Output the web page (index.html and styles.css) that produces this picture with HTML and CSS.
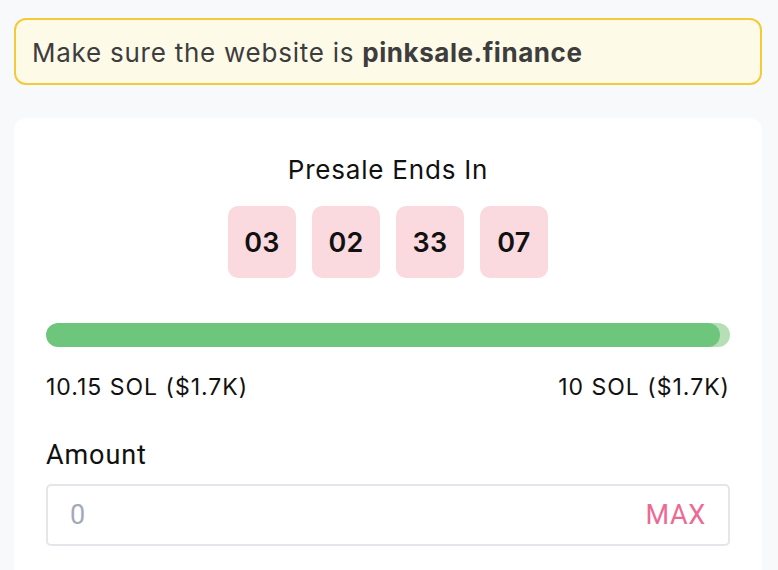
FILE: index.html
```html
<!DOCTYPE html>
<html lang="en">
<head>
<meta charset="utf-8">
<title>Presale</title>
<link rel="stylesheet" href="styles.css">
</head>
<body>
<div class="page">
  <div class="notice">Make sure the website is <strong>pinksale.finance</strong></div>
  <section class="card">
    <h2 class="title">Presale Ends In</h2>
    <div class="countdown">
      <div class="cell">03</div>
      <div class="cell">02</div>
      <div class="cell">33</div>
      <div class="cell">07</div>
    </div>
    <div class="progress">
      <div class="progress-fill" style="width: 98.6%"></div>
    </div>
    <div class="range">
      <span>10.15 SOL ($1.7K)</span>
      <span>10 SOL ($1.7K)</span>
    </div>
    <label class="field-label" for="amount">Amount</label>
    <div class="field">
      <input id="amount" class="field-input" type="text" placeholder="0">
      <button class="max-btn" type="button">MAX</button>
    </div>
  </section>
</div>
</body>
</html>
```
FILE: styles.css
```css
* { box-sizing: border-box; }
html, body {
  margin: 0;
  background: #f8f9fb;
  font-family: Inter, "Noto Sans", sans-serif;
  color: #111;
}
.page {
  padding: 18px 16px 0 14px;
  display: flex;
  flex-direction: column;
  gap: 33px;
}
.notice {
  border: 2px solid #f3ca3a;
  background: #fefae8;
  border-radius: 12px;
  padding: 15px 16px 13px 16px;
  font-size: 26px;
  line-height: 35px;
  letter-spacing: 0.75px;
  color: #3d3d3d;
  white-space: nowrap;
}
.notice strong { font-weight: 700; letter-spacing: 0.55px; }
.card {
  background: #fff;
  border-radius: 12px;
  padding: 34px 32px 40px;
  display: flex;
  flex-direction: column;
}
.title {
  margin: 0;
  text-align: center;
  font-size: 26px;
  line-height: 36px;
  letter-spacing: 0.8px;
  font-weight: 400;
  color: #111;
}
.countdown {
  margin-top: 18px;
  display: flex;
  justify-content: center;
  gap: 16px;
}
.cell {
  width: 68px;
  height: 72px;
  border-radius: 10px;
  background: #fadadf;
  display: flex;
  align-items: center;
  justify-content: center;
  font-size: 27px;
  font-weight: 600;
  letter-spacing: 0.3px;
  color: #111;
}
.progress {
  margin-top: 45px;
  height: 24px;
  border-radius: 12px;
  background: #b6dfb6;
  overflow: hidden;
}
.progress-fill {
  height: 100%;
  border-radius: 12px;
  background: #6ec57c;
}
.range {
  margin-top: 26px;
  display: flex;
  justify-content: space-between;
  font-size: 23px;
  line-height: 28px;
  letter-spacing: 1px;
  color: #111;
}
.field-label {
  margin-top: 39px;
  font-family: Roboto, "Noto Sans", sans-serif;
  font-size: 27px;
  line-height: 30px;
  letter-spacing: 0.9px;
  color: #111;
}
.field {
  margin-top: 14px;
  height: 62px;
  border: 2px solid #e5e5eb;
  border-radius: 5px;
  display: flex;
  align-items: center;
  padding: 0 22px;
}
.field-input {
  flex: 1;
  min-width: 0;
  border: 0;
  outline: 0;
  background: transparent;
  font-family: Roboto, "Noto Sans", sans-serif;
  font-size: 27px;
  color: #111;
  padding: 0;
}
.field-input::placeholder { color: #a3a9bb; }
.max-btn {
  border: 0;
  background: transparent;
  padding: 0;
  font-family: Roboto, "Noto Sans", sans-serif;
  font-size: 27px;
  letter-spacing: 0.7px;
  color: #ec6a94;
  cursor: pointer;
}
```
